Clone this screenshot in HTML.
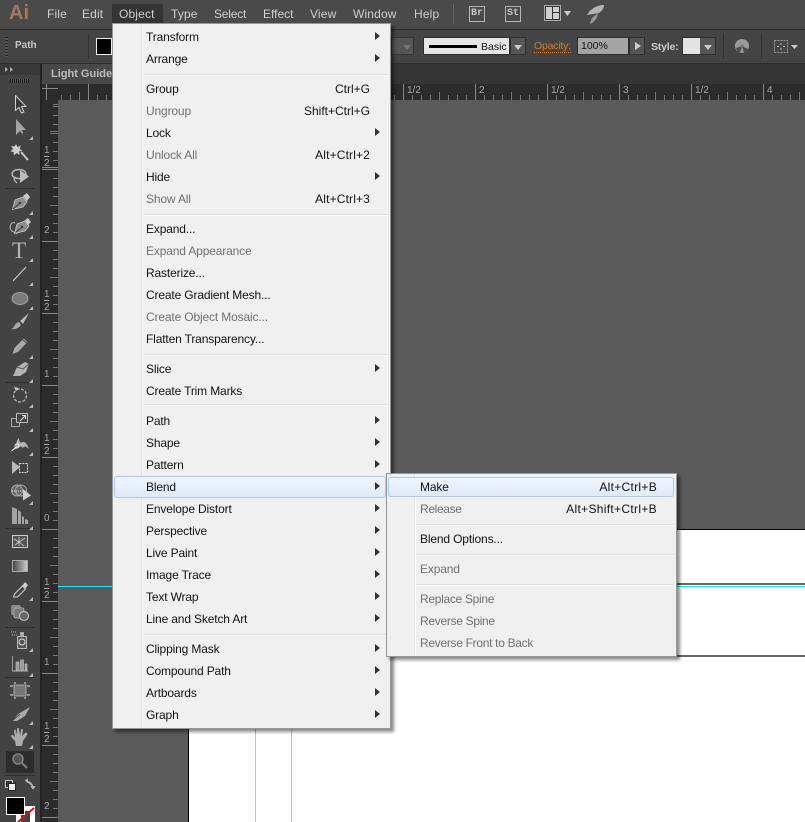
<!DOCTYPE html>
<html><head><meta charset="utf-8"><style>
html,body{margin:0;padding:0}
body{width:805px;height:822px;overflow:hidden;position:relative;background:#5a5a5a;font-family:"Liberation Sans",sans-serif;font-size:12px}
.a,.i,.s,.m,.r,.v,.h,.t{position:absolute}
.t{color:#cfcfcf;top:7px;line-height:15px;font-size:12px;letter-spacing:.15px}
.i{left:146px;line-height:16px;color:#111;white-space:nowrap;letter-spacing:-.15px}
.d{color:#707070}
.s{left:250px;width:120px;text-align:right;line-height:16px;color:#111;letter-spacing:.15px;white-space:nowrap}
.sep{position:absolute;left:143px;width:245px;height:2px;background:#e0e0e0;border-bottom:1px solid #fafafa;box-sizing:border-box}
.ar{position:absolute;left:375px;width:0;height:0;border-left:5px solid #333;border-top:4px solid transparent;border-bottom:4px solid transparent}
.rl{position:absolute;color:#a8a8a8;font-size:10px;line-height:11px}
.corner{position:absolute;width:0;height:0;border-left:4px solid transparent;border-bottom:4px solid #bdbdbd}
.dd{position:absolute;width:0;height:0;border-top:5px solid #ccc;border-left:4px solid transparent;border-right:4px solid transparent}
</style></head><body>

<!-- top bar -->
<div class="a" style="left:0;top:0;width:805px;height:29px;background:#4a4a4a"></div>
<div class="a" style="left:0;top:29px;width:805px;height:1px;background:#2c2c2c"></div>
<div class="a" style="left:9px;top:1px;font:bold 20px/24px 'Liberation Sans',sans-serif;color:#a9785c">Ai</div>
<div class="t" style="left:47px">File</div>
<div class="t" style="left:82px">Edit</div>
<div class="a" style="left:112px;top:4px;width:51px;height:20px;background:#343434;border-radius:2px 2px 0 0"></div>
<div class="t" style="left:119px">Object</div>
<div class="t" style="left:171px">Type</div>
<div class="t" style="left:214px;letter-spacing:-.2px">Select</div>
<div class="t" style="left:263px;letter-spacing:0">Effect</div>
<div class="t" style="left:310px">View</div>
<div class="t" style="left:353px">Window</div>
<div class="t" style="left:414px">Help</div>
<div class="a" style="left:453px;top:4px;width:1px;height:20px;background:#666"></div>
<div class="a" style="left:469px;top:6px;width:14px;height:14px;border:1px solid #b4b4b4;color:#c4c4c4;font:bold 10px/14px 'Liberation Mono',monospace;text-align:center">Br</div>
<div class="a" style="left:505px;top:6px;width:14px;height:14px;border:1px solid #b4b4b4;color:#c4c4c4;font:bold 10px/14px 'Liberation Mono',monospace;text-align:center">St</div>
<svg class="a" style="left:540px;top:2px" width="72" height="24"><rect x="4.500" y="3.500" width="16" height="15" fill="#333" stroke="#aaa"/><rect x="6" y="5" width="6" height="12" fill="#d0d0d0"/><rect x="13" y="5" width="6" height="5" fill="#d0d0d0"/><rect x="13" y="11" width="6" height="6" fill="#d0d0d0"/><path d="M24 9h7l-3.500 5z" fill="#ccc"/><path d="M64 3C57 3 50 7 47 13c5-1 8-1 12-2 3-2 5-5 5-8z" fill="#b4b4b4"/><path d="M58 12c-3 1-7 3-8 10 4-2 7-5 8-10z" fill="#999"/></svg>

<!-- control bar -->
<div class="a" style="left:0;top:30px;width:805px;height:33px;background:#444"></div>
<div class="a" style="left:0;top:63px;width:805px;height:1px;background:#2a2a2a"></div>
<div class="a" style="left:5px;top:37px;width:3px;height:20px;background:repeating-linear-gradient(#1f1f1f 0 1px,#555 1px 3px)"></div>
<div class="a" style="left:15px;top:38px;font:bold 10px/15px 'Liberation Sans',sans-serif;color:#c8c8c8">Path</div>
<div class="a" style="left:88px;top:34px;width:1px;height:25px;background:#333"></div>
<div class="a" style="left:96px;top:38px;width:14px;height:15px;background:#000;border:1px solid #eee"></div>
<div class="a" style="left:391px;top:37px;width:23px;height:18px;background:#555;border:1px solid #333;box-sizing:border-box"></div>
<div class="dd" style="left:403px;top:45px;border-top-color:#777"></div>
<div class="a" style="left:423px;top:37px;width:87px;height:18px;background:#e6e6e6;border:1px solid #2e2e2e;box-sizing:border-box"></div>
<div class="a" style="left:429px;top:45px;width:48px;height:3px;background:#000"></div>
<div class="a" style="left:481px;top:41px;font-size:10.500px;line-height:13px;color:#111">Basic</div>
<div class="a" style="left:510px;top:37px;width:16px;height:18px;background:#555;border:1px solid #2e2e2e;box-sizing:border-box"></div>
<div class="dd" style="left:514px;top:45px"></div>
<div class="a" style="left:534px;top:40px;font-size:10.500px;line-height:12px;color:#d67b24;border-bottom:1px dotted #d67b24;letter-spacing:-.2px">Opacity:</div>
<div class="a" style="left:577px;top:37px;width:52px;height:18px;background:#a4a4a4;border:1px solid #2e2e2e;box-sizing:border-box;color:#111;font-size:10.500px;line-height:16px;padding-left:3px">100%</div>
<div class="a" style="left:629px;top:37px;width:16px;height:18px;background:#555;border:1px solid #2e2e2e;box-sizing:border-box"></div>
<div class="a" style="left:635px;top:42px;width:0;height:0;border-left:6px solid #ccc;border-top:4px solid transparent;border-bottom:4px solid transparent"></div>
<div class="a" style="left:651px;top:41px;font:bold 10.500px/13px 'Liberation Sans',sans-serif;color:#ccc;letter-spacing:-.2px">Style:</div>
<div class="a" style="left:682px;top:37px;width:34px;height:18px;background:#555;border:1px solid #2e2e2e;box-sizing:border-box"></div>
<div class="a" style="left:683px;top:38px;width:17px;height:16px;background:#e4e4e4"></div>
<div class="dd" style="left:704px;top:45px"></div>
<div class="a" style="left:723px;top:34px;width:1px;height:25px;background:#333"></div>
<svg class="a" style="left:733px;top:37px" width="18" height="18"><circle cx="9" cy="9" r="7" fill="#9a9a9a"/><path d="M9 9L3 11a7 7 0 0 0 4 5zM9 9l2 7a7 7 0 0 0 4-4z" fill="#4a4a4a"/><circle cx="9" cy="9" r="1.500" fill="#777"/></svg>
<div class="a" style="left:761px;top:34px;width:1px;height:25px;background:#333"></div>
<svg class="a" style="left:771px;top:36px" width="30" height="20"><rect x="3.500" y="4.500" width="13" height="12" fill="none" stroke="#999" stroke-dasharray="2 1"/><path d="M10 7v2M10 12v2M6 10.500h2M12 10.500h2" stroke="#bbb"/><path d="M20 9h7l-3.500 4z" fill="#ccc"/></svg>

<!-- tab strip -->
<div class="a" style="left:0;top:64px;width:805px;height:20px;background:#353535"></div>
<div class="a" style="left:42px;top:64px;width:70px;height:20px;background:#484848"></div>
<div class="a" style="left:51px;top:67px;font:bold 11px/15px 'Liberation Sans',sans-serif;color:#bdbdbd;white-space:nowrap">Light Guide</div>

<!-- left tool panel -->
<div class="a" style="left:0;top:64px;width:41px;height:758px;background:#434343"></div>
<div class="a" style="left:0;top:64px;width:41px;height:11px;background:#383838"></div>
<div class="a" style="left:40px;top:64px;width:2px;height:758px;background:#232323"></div>
<svg class="a" style="left:4px;top:66px" width="12" height="7"><path d="M1 1l3 2.500-3 2.500zM6 1l3 2.500-3 2.500z" fill="#aaa"/></svg>
<div class="a" style="left:10px;top:79px;width:19px;height:4px;background:repeating-linear-gradient(90deg,#161616 0 1px,#5a5a5a 1px 2px)"></div>
<div class="a" style="left:5px;top:188px;width:30px;height:1px;background:#2e2e2e"></div>
<div class="a" style="left:5px;top:382px;width:30px;height:1px;background:#2e2e2e"></div>
<div class="a" style="left:5px;top:528px;width:30px;height:1px;background:#2e2e2e"></div>
<div class="a" style="left:5px;top:627px;width:30px;height:1px;background:#2e2e2e"></div>
<div class="a" style="left:5px;top:677px;width:30px;height:1px;background:#2e2e2e"></div>
<div class="a" style="left:5px;top:775px;width:30px;height:1px;background:#2e2e2e"></div>
<div class="a" style="left:6px;top:751px;width:28px;height:22px;background:#2c2c2c"></div>

<svg class="a" style="left:0;top:84px" width="41" height="738" viewBox="0 84 41 738" fill="none" stroke-linejoin="round">
<!-- selection -->
<path d="M15.500 95.500v15l3.500-3 2.500 5.500 2.500-1-2.500-5.500h4.500z" stroke="#d0d0d0" fill="#3a3a3a"/>
<path d="M16 119v16l4-4 2 3 1-1-1-3h4z" fill="#a4a4a4"/>
<!-- wand -->
<path d="M21 152l7 8" stroke="#c8c8c8" stroke-width="2"/><path d="M16 144l1.500 3 3.500-1.500-1.500 3.500 3 1.500-3.500 1 .5 3.500-3-2-2.500 2.500-.5-3.500-3-.5 2.500-2.500-2-3 3.500.5z" fill="#cfcfcf"/>
<!-- lasso -->
<ellipse cx="19" cy="174" rx="7" ry="4.500" stroke="#b4b4b4" stroke-width="1.500"/><path d="M20 170l9 6.500-9 6.500z" fill="#bdbdbd"/><path d="M14 178c0 2 1 3 3 5" stroke="#b4b4b4" stroke-width="1.300"/>
<!-- pen -->
<path d="M12.500 209.500L15 200l8-3 4 5-4 5z" fill="#8c8c8c" stroke="#ccc" stroke-width=".8"/><path d="M23 196l4-3 3 4-3 4z" fill="#c8c8c8"/><path d="M13 209l6-5" stroke="#333"/><circle cx="20" cy="203" r="1.200" fill="#333"/>
<!-- curvature pen -->
<path d="M14.500 233.500L17 224l8-3 4 5-4 5z" fill="#8c8c8c" stroke="#ccc" stroke-width=".8"/><path d="M25 220l3-2 3 4-3 3z" fill="#c8c8c8"/><path d="M15 233l6-5" stroke="#333"/><circle cx="22" cy="227" r="1.200" fill="#333"/><path d="M15 223c-4-2-6 4-4 7 2 3 5 2 6 4" stroke="#bbb"/>
<text x="12" y="258" font-family="Liberation Serif,serif" font-size="23" fill="#b4b4b4" stroke="none">T</text>
<path d="M13 281l13-14" stroke="#c8c8c8" stroke-width="1.200"/>
<ellipse cx="20" cy="298.500" rx="8" ry="6" fill="#7c7c7c" stroke="#a0a0a0"/>
<path d="M20 321l9-8-6 11z" fill="#bbb"/><path d="M11 329c4-1 3-6 8-7l2 3c-2 3-6 5-10 4z" fill="#a8a8a8"/>
<!-- pencil -->
<path d="M12.500 354l2-6 9-9.500 4 3.500-9 9.500z" fill="#a8a8a8"/><path d="M22.500 339.500l4 3.500" stroke="#444"/>
<!-- eraser -->
<path d="M13 376l4-9 8-5 4 2-3 8-6 4z" fill="#b4b4b4"/><path d="M17 367l6 2 6-5" stroke="#5a5a5a"/>
<!-- rotate -->
<circle cx="20" cy="395.500" r="6.500" stroke="#b8b8b8" stroke-dasharray="3 1.500" stroke-width="1.300"/><path d="M14 387l4.500 1-2.500 3z" fill="#ccc"/>
<!-- scale -->
<rect x="11.500" y="418.500" width="8" height="8" stroke="#aaa"/><rect x="16.500" y="413.500" width="11" height="9" stroke="#bbb" fill="#434343"/><path d="M20 421l5-5M22 415.500h3.500v3.500" stroke="#ddd"/>
<!-- warp -->
<path d="M11 451l5-4c0-4 1-8 3-9 0 3 1 4 2 5 2-2 5-2 8 6-3-3-5-3-6-1-2-2-4-2-5 0z" fill="#b4b4b4"/><circle cx="17" cy="446" r="2" stroke="#eee"/><path d="M11.500 451l4-3.500" stroke="#eee"/>
<!-- free transform -->
<path d="M12 461l8 6-8 7z" fill="#bbb"/><rect x="19.500" y="463.500" width="8" height="9" stroke="#ddd" stroke-dasharray="2 1"/>
<!-- shape builder -->
<circle cx="17" cy="490.500" r="5.500" fill="#666" stroke="#aaa"/><circle cx="21" cy="490.500" r="5.500" stroke="#aaa"/><path d="M12 491h10" stroke="#eee" stroke-dasharray="1 1"/><path d="M23 489l8 6.500-8 5z" fill="#ccc"/>
<!-- perspective -->
<path d="M12 507l5 2v15h-5zM18 510l3 2v12h-3zM22 516l2 1v7h-2zM25 519l3 1v4h-3z" fill="#a4a4a4"/>
<!-- mesh -->
<rect x="12.500" y="535.500" width="15" height="12" fill="#555" stroke="#ccc"/><path d="M14 539l5 3 6-4M15 545l4-3 5 4M19 537v9" stroke="#ccc" stroke-width=".8"/>
<defs><linearGradient id="gr"><stop offset="0" stop-color="#444"/><stop offset="1" stop-color="#ccc"/></linearGradient></defs>
<rect x="12.500" y="560.500" width="15" height="11" fill="url(#gr)" stroke="#aaa"/>
<!-- eyedropper -->
<path d="M13.500 597l1-3 8-8 3 3-8 8z" stroke="#ccc" stroke-width="1.100"/><path d="M22 586l3-4 3 3-3 4z" fill="#ccc"/>
<!-- blend -->
<rect x="11" y="605" width="10" height="10" rx="2" fill="#888"/><rect x="14" y="608" width="10" height="10" rx="2" fill="#777" stroke="#aaa"/><circle cx="24" cy="616" r="4.500" fill="#666" stroke="#bbb" stroke-width="1.200"/>
<!-- spray -->
<rect x="17.500" y="636.500" width="9" height="12" fill="#555" stroke="#bbb"/><circle cx="22" cy="642" r="3" stroke="#ddd"/><path d="M20 632h4v4h-4z" fill="#aaa"/><path d="M11 632h6M12 635h5" stroke="#bbb" stroke-dasharray="1 1"/>
<!-- column graph -->
<path d="M12.500 671v-15M16 670h3v-8h-3zM20.500 670h3v-10h-3zM25 670h2v-6h-2z" fill="#999" stroke="#bbb" stroke-width=".7"/><path d="M12 671h16" stroke="#bbb"/>
<!-- artboard -->
<rect x="14" y="685" width="12" height="11" fill="#777" stroke="#aaa"/><path d="M10 686h3M27 686h3M10 695h3M27 695h3M15 682v2M25 682v2M15 697v2M25 697v2" stroke="#ddd"/>
<!-- slice -->
<path d="M12 721l6-7 12-7-5 9-8 5z" fill="#aaa"/><path d="M12 721l8-7" stroke="#444"/>
<!-- hand -->
<path d="M15 741c-2-2-4-4-4-5 1-2 2-1 4 1l-1-6c0-2 2-2 2 0l1 4v-6c0-1.500 2-1.500 2 0l1 6 1-5c1-2 2-1 2 0l-1 6 3-3c2-1 3 0 2 2l-4 6-1 5h-6z" fill="#aaa"/>
<!-- zoom -->
<circle cx="18" cy="759" r="5" fill="#555" stroke="#808080" stroke-width="1.500"/><path d="M22 763l5 5" stroke="#808080" stroke-width="2"/>
<!-- default colours / swap -->
<rect x="5.500" y="780.500" width="7" height="7" fill="#333" stroke="#ccc"/><rect x="8.500" y="783.500" width="7" height="7" fill="#eee" stroke="#222"/>
<path d="M26 781c3 0 6 2 7 6M25.500 780.500l2-1.500v3.500zM33 789l-2-2.500h4z" stroke="#bbb" fill="#bbb" stroke-width=".8"/>
</svg>
<div class="corner" style="left:29px;top:136px"></div><div class="corner" style="left:29px;top:211px"></div><div class="corner" style="left:29px;top:235px"></div><div class="corner" style="left:29px;top:258px"></div><div class="corner" style="left:29px;top:282px"></div><div class="corner" style="left:29px;top:306px"></div><div class="corner" style="left:29px;top:355px"></div><div class="corner" style="left:29px;top:379px"></div><div class="corner" style="left:29px;top:404px"></div><div class="corner" style="left:29px;top:428px"></div><div class="corner" style="left:29px;top:452px"></div><div class="corner" style="left:29px;top:501px"></div><div class="corner" style="left:29px;top:526px"></div><div class="corner" style="left:29px;top:597px"></div><div class="corner" style="left:29px;top:648px"></div><div class="corner" style="left:29px;top:673px"></div><div class="corner" style="left:29px;top:721px"></div><div class="corner" style="left:29px;top:745px"></div>
<!-- fill/stroke -->
<div class="a" style="left:16px;top:806px;width:19px;height:16px;background:#fff"></div>
<div class="a" style="left:21px;top:811px;width:9px;height:11px;background:#444"></div>
<svg class="a" style="left:16px;top:805px" width="20" height="17"><path d="M2 17L18 3" stroke="#e01010" stroke-width="2"/></svg>
<div class="a" style="left:6px;top:797px;width:17px;height:16px;background:#000;border:1px solid #fff"></div>

<!-- rulers -->
<div class="a" style="left:42px;top:84px;width:763px;height:16px;background:#2b2b2b"></div>
<div class="a" style="left:42px;top:84px;width:16px;height:738px;background:#2b2b2b"></div>
<div class="a" style="left:58px;top:95px;width:747px;height:5px;background:repeating-linear-gradient(90deg,#777 0 1px,transparent 1px 9px);background-position:3px 0"></div>
<div class="a" style="left:58px;top:92px;width:747px;height:8px;background:repeating-linear-gradient(90deg,#777 0 1px,transparent 1px 36px);background-position:21px 0"></div>
<div class="a" style="left:58px;top:84px;width:747px;height:16px;background:repeating-linear-gradient(90deg,#888 0 1px,transparent 1px 72px);background-position:57px 0"></div>
<div class="a" style="left:53px;top:100px;width:5px;height:722px;background:repeating-linear-gradient(#777 0 1px,transparent 1px 9px);background-position:0 6px"></div>
<div class="a" style="left:50px;top:100px;width:8px;height:722px;background:repeating-linear-gradient(#777 0 1px,transparent 1px 36px);background-position:0 33px"></div>
<div class="a" style="left:42px;top:100px;width:16px;height:722px;background:repeating-linear-gradient(#888 0 1px,transparent 1px 72px);background-position:0 69px"></div>
<div class="a" style="left:42px;top:88px;width:16px;height:1px;background:#888"></div>
<div class="a" style="left:46px;top:84px;width:1px;height:16px;background:#888"></div>
<div class="rl" style="left:407px;top:85px">1/2</div><div class="rl" style="left:479px;top:85px">2</div><div class="rl" style="left:551px;top:85px">1/2</div><div class="rl" style="left:623px;top:85px">3</div><div class="rl" style="left:695px;top:85px">1/2</div><div class="rl" style="left:767px;top:85px">4</div>
<div class="rl" style="left:44px;top:145px">1</div><div class="a" style="left:44px;top:156px;width:5px;height:1px;background:#aaa"></div><div class="rl" style="left:44px;top:158px">2</div>
<div class="rl" style="left:44px;top:225px">2</div>
<div class="rl" style="left:44px;top:289px">1</div><div class="a" style="left:44px;top:300px;width:5px;height:1px;background:#aaa"></div><div class="rl" style="left:44px;top:302px">2</div>
<div class="rl" style="left:44px;top:369px">1</div>
<div class="rl" style="left:44px;top:433px">1</div><div class="a" style="left:44px;top:444px;width:5px;height:1px;background:#aaa"></div><div class="rl" style="left:44px;top:446px">2</div>
<div class="rl" style="left:44px;top:513px">0</div>
<div class="rl" style="left:44px;top:577px">1</div><div class="a" style="left:44px;top:588px;width:5px;height:1px;background:#aaa"></div><div class="rl" style="left:44px;top:590px">2</div>
<div class="rl" style="left:44px;top:657px">1</div>
<div class="rl" style="left:44px;top:721px">1</div><div class="a" style="left:44px;top:732px;width:5px;height:1px;background:#aaa"></div><div class="rl" style="left:44px;top:734px">2</div>
<div class="rl" style="left:44px;top:801px">2</div>

<!-- canvas -->
<div class="a" style="left:58px;top:100px;width:747px;height:722px;background:#5a5a5a"></div>
<div class="a" style="left:188px;top:529px;width:617px;height:293px;background:#fff;border-top:1px solid #000;border-left:1px solid #000;box-sizing:border-box"></div>
<div class="a" style="left:58px;top:586px;width:747px;height:1px;background:#1fe6ee"></div>
<div class="a" style="left:677px;top:583px;width:128px;height:2px;background:#666"></div>
<div class="a" style="left:677px;top:655px;width:128px;height:2px;background:#666"></div>
<div class="a" style="left:255px;top:700px;width:1px;height:122px;background:#60e8f0"></div>
<div class="a" style="left:291px;top:700px;width:1px;height:122px;background:#60e8f0"></div>

<!-- Object menu -->
<div class="m" style="left:112px;top:23px;width:279px;height:706px;background:#f0f0f0;border:1px solid #979797;box-sizing:border-box;box-shadow:3px 3px 3px rgba(0,0,0,.45)"></div>
<div class="a" style="left:141px;top:24px;width:1px;height:704px;background:#e2e2e2"></div>
<div class="a" style="left:142px;top:24px;width:1px;height:704px;background:#fff"></div>
<div class="sep" style="top:74px"></div><div class="sep" style="top:214px"></div><div class="sep" style="top:354px"></div><div class="sep" style="top:404px"></div><div class="sep" style="top:634px"></div>
<div class="a" style="left:114px;top:476px;width:272px;height:22px;background:linear-gradient(#f0f5fc,#dfeafa);border:1px solid #a8c8ee;border-radius:3px;box-sizing:border-box"></div>

<div class="i" style="top:29px">Transform</div>
<div class="i" style="top:51px">Arrange</div>
<div class="i" style="top:81px">Group</div><div class="s" style="top:81px;letter-spacing:0">Ctrl+G</div>
<div class="i d" style="top:103px">Ungroup</div><div class="s d" style="top:103px;letter-spacing:0">Shift+Ctrl+G</div>
<div class="i" style="top:125px">Lock</div>
<div class="i d" style="top:147px">Unlock All</div><div class="s d" style="top:147px">Alt+Ctrl+2</div>
<div class="i" style="top:169px">Hide</div>
<div class="i d" style="top:191px">Show All</div><div class="s d" style="top:191px">Alt+Ctrl+3</div>
<div class="i" style="top:221px">Expand...</div>
<div class="i d" style="top:243px">Expand Appearance</div>
<div class="i" style="top:265px">Rasterize...</div>
<div class="i" style="top:287px">Create Gradient Mesh...</div>
<div class="i d" style="top:309px">Create Object Mosaic...</div>
<div class="i" style="top:331px">Flatten Transparency...</div>
<div class="i" style="top:361px">Slice</div>
<div class="i" style="top:383px">Create Trim Marks</div>
<div class="i" style="top:413px">Path</div>
<div class="i" style="top:435px">Shape</div>
<div class="i" style="top:457px">Pattern</div>
<div class="i" style="top:479px">Blend</div>
<div class="i" style="top:501px">Envelope Distort</div>
<div class="i" style="top:523px">Perspective</div>
<div class="i" style="top:545px">Live Paint</div>
<div class="i" style="top:567px">Image Trace</div>
<div class="i" style="top:589px">Text Wrap</div>
<div class="i" style="top:611px">Line and Sketch Art</div>
<div class="i" style="top:641px">Clipping Mask</div>
<div class="i" style="top:663px">Compound Path</div>
<div class="i" style="top:685px">Artboards</div>
<div class="i" style="top:707px">Graph</div>

<div class="ar" style="top:32px"></div><div class="ar" style="top:54px"></div><div class="ar" style="top:128px"></div><div class="ar" style="top:172px"></div><div class="ar" style="top:364px"></div><div class="ar" style="top:416px"></div><div class="ar" style="top:438px"></div><div class="ar" style="top:460px"></div><div class="ar" style="top:482px"></div><div class="ar" style="top:504px"></div><div class="ar" style="top:526px"></div><div class="ar" style="top:548px"></div><div class="ar" style="top:570px"></div><div class="ar" style="top:592px"></div><div class="ar" style="top:614px"></div><div class="ar" style="top:644px"></div><div class="ar" style="top:666px"></div><div class="ar" style="top:688px"></div><div class="ar" style="top:710px"></div>

<!-- Blend submenu -->
<div class="m" style="left:386px;top:473px;width:291px;height:184px;background:#f0f0f0;border:1px solid #979797;box-sizing:border-box;box-shadow:3px 3px 3px rgba(0,0,0,.45)"></div>
<div class="a" style="left:414px;top:474px;width:1px;height:182px;background:#e2e2e2"></div>
<div class="a" style="left:415px;top:474px;width:1px;height:182px;background:#fff"></div>
<div class="a" style="left:388px;top:477px;width:286px;height:20px;background:linear-gradient(#f0f5fc,#dfeafa);border:1px solid #a8c8ee;border-radius:3px;box-sizing:border-box"></div>
<div class="sep" style="left:416px;width:258px;top:524px"></div>
<div class="sep" style="left:416px;width:258px;top:554px"></div>
<div class="sep" style="left:416px;width:258px;top:584px"></div>
<div class="i" style="left:420px;top:479px">Make</div><div class="s" style="left:537px;top:479px;letter-spacing:.3px">Alt+Ctrl+B</div>
<div class="i d" style="left:420px;top:501px;letter-spacing:-.35px">Release</div><div class="s d" style="left:537px;top:501px;letter-spacing:.32px">Alt+Shift+Ctrl+B</div>
<div class="i" style="left:420px;top:531px">Blend Options...</div>
<div class="i d" style="left:420px;top:561px">Expand</div>
<div class="i d" style="left:420px;top:591px;letter-spacing:-.3px">Replace Spine</div>
<div class="i d" style="left:420px;top:613px;letter-spacing:-.3px">Reverse Spine</div>
<div class="i d" style="left:420px;top:635px;letter-spacing:-.3px">Reverse Front to Back</div>
</body></html>
